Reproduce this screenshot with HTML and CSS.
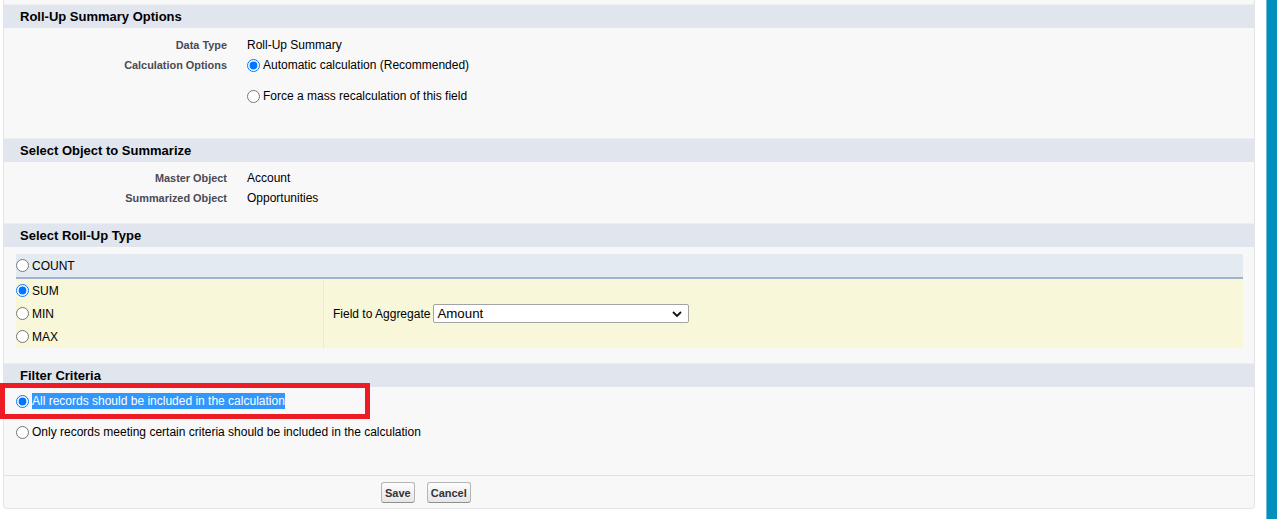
FILE: index.html
```html
<!DOCTYPE html>
<html lang="en">
<head>
  <meta charset="UTF-8">
  <title>Roll-Up Summary Options</title>
  <link rel="stylesheet" href="styles.css">
</head>
<body>
<div class="page">
  <div class="panel">

    <div class="section-head">Roll-Up Summary Options</div>
    <div class="section-body opts">
      <div class="row">
        <div class="label">Data Type</div>
        <div class="data">Roll-Up Summary</div>
      </div>
      <div class="row">
        <div class="label">Calculation Options</div>
        <div class="data radio-stack">
          <label class="radio"><input type="radio" name="calc" checked> Automatic calculation (Recommended)</label>
          <label class="radio"><input type="radio" name="calc"> Force a mass recalculation of this field</label>
        </div>
      </div>
    </div>

    <div class="section-head">Select Object to Summarize</div>
    <div class="section-body objects">
      <div class="row">
        <div class="label">Master Object</div>
        <div class="data">Account</div>
      </div>
      <div class="row">
        <div class="label">Summarized Object</div>
        <div class="data">Opportunities</div>
      </div>
    </div>

    <div class="section-head">Select Roll-Up Type</div>
    <div class="section-body rollup">
      <div class="rollup-table">
        <div class="count-row">
          <label class="radio"><input type="radio" name="type"> COUNT</label>
        </div>
        <div class="agg-rows">
          <div class="agg-types">
            <label class="radio"><input type="radio" name="type" checked> SUM</label>
            <label class="radio"><input type="radio" name="type"> MIN</label>
            <label class="radio"><input type="radio" name="type"> MAX</label>
          </div>
          <div class="agg-field">
            <span>Field to Aggregate</span>
            <div class="select-wrap">
              <select>
                <option>Amount</option>
              </select>
              <svg class="chevron" width="10" height="6" viewBox="0 0 10 6"><path d="M1 1l4 4 4-4" fill="none" stroke="#111" stroke-width="1.8"/></svg>
            </div>
          </div>
        </div>
      </div>
    </div>

    <div class="section-head">Filter Criteria</div>
    <div class="section-body filter">
      <label class="radio"><input type="radio" name="filter" checked> <span class="selected">All records should be included in the calculation</span></label>
      <label class="radio"><input type="radio" name="filter"> Only records meeting certain criteria should be included in the calculation</label>
    </div>

    <div class="footer">
      <button class="btn">Save</button>
      <button class="btn">Cancel</button>
    </div>
  </div>

  <div class="sidebar"></div>

  <!-- annotation drawn over the screenshot -->
  <div class="callout"></div>
</div>
</body>
</html>
```

FILE: styles.css
```css
body {
  margin: 0;
  background: #fff;
  font-family: "Liberation Sans", Arial, sans-serif;
  font-size: 12px;
  color: #000;
}

.page {
  position: relative;
  display: flex;
  align-items: flex-start;
  height: 519px;
  overflow: hidden;
}

.panel {
  width: 1252px;
  margin-left: 3px;
  padding-top: 4px;
  background: #f8f8f8;
  border: 1px solid #e2e4e6;
  border-top: none;
  border-radius: 0 0 4px 4px;
  box-sizing: border-box;
}

.sidebar {
  width: 10px;
  height: 519px;
  margin-left: 11px;
  background: #0090bb;
  border-left: 1px solid #6cbad6;
}

.section-head {
  height: 23px;
  line-height: 23px;
  padding-left: 16px;
  border-top: 1px solid #eceef2;
  background: #e0e5ee;
  font-size: 13px;
  font-weight: bold;
  color: #000;
}

.row {
  display: grid;
  grid-template-columns: 233px 1fr;
  padding: 3px 0;
  line-height: 14px;
}

.label {
  padding-right: 10px;
  text-align: right;
  font-size: 10.9px;
  font-weight: bold;
  color: #4a4a56;
}

.data {
  padding-left: 10px;
}

.radio {
  display: flex;
  align-items: center;
  height: 14px;
  gap: 3px;
}

.radio input {
  width: 13px;
  height: 13px;
  margin: 0;
}

.radio-stack {
  display: flex;
  flex-direction: column;
  gap: 17px;
}

.opts {
  padding: 7px 0 32px;
}

.objects {
  padding: 6px 0 15px;
}

.rollup {
  padding: 7px 11px 15px 12px;
}

.rollup-table .radio {
  height: 23px;
}

.count-row {
  height: 23px;
  background: #e3eaf0;
  border-bottom: 2px solid #9fb3cf;
}

.agg-rows {
  display: flex;
  background: #f8f7d9;
}

.agg-types {
  width: 307px;
}

.agg-field {
  flex: 1;
  display: flex;
  align-items: center;
  gap: 3px;
  padding-left: 9px;
  border-left: 1px solid #ecebcf;
}

.select-wrap {
  position: relative;
}

.select-wrap select {
  appearance: none;
  width: 256px;
  height: 19px;
  margin: 0;
  padding: 0 0 0 3px;
  border: 1px solid #a3a3a3;
  border-radius: 2px;
  background: #fff;
  font-family: "Liberation Sans", Arial, sans-serif;
  font-size: 13.3px;
  color: #000;
}

.chevron {
  position: absolute;
  right: 7px;
  top: 7px;
}

.filter {
  display: flex;
  flex-direction: column;
  gap: 15px;
  padding: 6px 0 35px 12px;
}

.filter .radio {
  height: 16px;
}

.selected {
  background: #3297fd;
  color: #fff;
  line-height: 16px;
}

.footer {
  display: flex;
  gap: 12px;
  padding: 6px 0 5px 377px;
  border-top: 1px solid #e0e0e0;
}

.btn {
  height: 21px;
  padding: 0 3px;
  border: 1px solid #b5b5b5;
  border-bottom-color: #8f8f8f;
  border-radius: 3px;
  background: linear-gradient(#fdfdfd, #e6e6e6);
  font-family: "Liberation Sans", Arial, sans-serif;
  font-size: 11px;
  font-weight: bold;
  color: #333;
  cursor: pointer;
}

.callout {
  position: absolute;
  left: 0;
  top: 383px;
  width: 370px;
  height: 36px;
  box-sizing: border-box;
  border: 5px solid #ed1c24;
}
```
